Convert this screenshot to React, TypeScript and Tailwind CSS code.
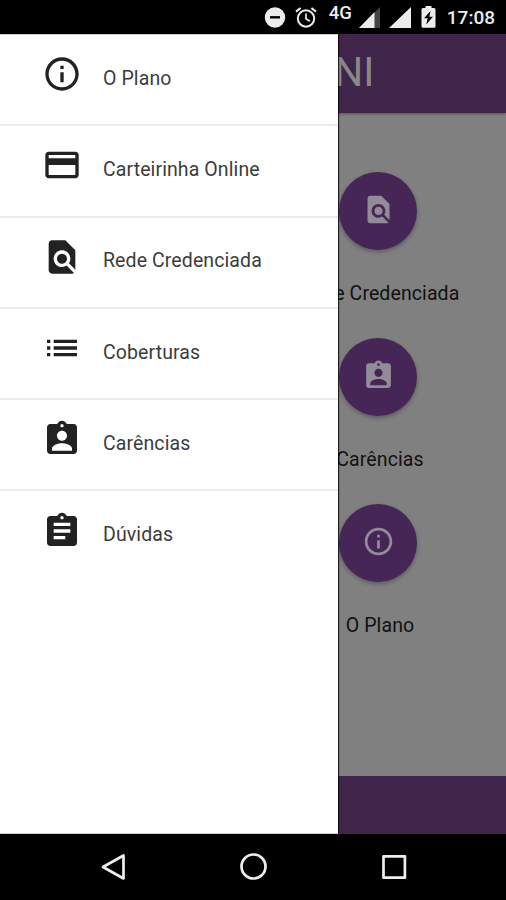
import type { IconType } from 'react-icons';
import {
    MdAssignment,
    MdAssignmentInd,
    MdCreditCard,
    MdFindInPage,
    MdInfoOutline,
    MdList,
} from 'react-icons/md';

interface IItem {
    label: string;
    Icon: IconType;
}

const menuItems: IItem[] = [
    { label: 'O Plano', Icon: MdInfoOutline },
    { label: 'Carteirinha Online', Icon: MdCreditCard },
    { label: 'Rede Credenciada', Icon: MdFindInPage },
    { label: 'Coberturas', Icon: MdList },
    { label: 'Carências', Icon: MdAssignmentInd },
    { label: 'Dúvidas', Icon: MdAssignment },
];

const shortcuts: IItem[] = [
    { label: 'Rede Credenciada', Icon: MdFindInPage },
    { label: 'Carências', Icon: MdAssignmentInd },
    { label: 'O Plano', Icon: MdInfoOutline },
];

const StatusBar = () => {
    return (
        <div className="flex h-[34px] shrink-0 items-center justify-end bg-black pt-px pr-[11px] text-[#ececec]">
            <svg className="mr-[9px] size-[22px]" viewBox="0 0 22 22">
                <circle cx="11" cy="10.500" r="10.2" fill="currentColor" />
                <path d="M6 10.3h10" stroke="#000" strokeWidth="2.4" />
            </svg>
            <svg className="mr-3 size-[22px]" viewBox="0 0 22 22" fill="none" stroke="currentColor">
                <circle cx="11" cy="11.500" r="8.2" strokeWidth="2" />
                <path d="M11 6.500v5.3l3.8 2.4" strokeWidth="1.7" />
                <path d="M1 4.7 5.6 1M21 4.7 16.400 1" strokeWidth="2.2" />
            </svg>
            <span className="mr-[6px] -mt-[9px] text-[18.5px] leading-none font-medium">4G</span>
            <svg className="mr-[9px] h-[21px] w-[22px]" viewBox="0 0 22 21">
                <path d="M22 0v21H1z" fill="#444" />
                <path d="M16.5 5v16H1z" fill="currentColor" />
            </svg>
            <svg className="mr-[10px] h-[21px] w-[22px]" viewBox="0 0 22 21">
                <path d="M22 0v21H0z" fill="currentColor" />
            </svg>
            <svg className="mr-[11px] -mt-px h-[22px] w-[15px]" viewBox="0 0 15 22">
                <path d="M4.5 0h6v2H13q1.5 0 1.5 1.5v16.700q0 1.500-1.500 1.500H2Q.5 21.700.5 20.200V3.500Q.5 2 2 2h2.500z" fill="currentColor" />
                <path d="M9.500 5 3 12.300h3.700L5.200 18.500l6.800-7.800H8.300z" fill="#000" />
            </svg>
            <span className="text-[19px] leading-none font-medium">17:08</span>
        </div>
    );
};

const Drawer = () => {
    return (
        <nav className="absolute inset-y-0 left-0 w-[338px] border-t border-b border-[#ccc] bg-white shadow-[1px_0_1px_0_rgba(0,0,0,0.75)]">
            {menuItems.map(({ label, Icon }) => (
                <div key={label} className="flex h-[91.3px] items-center border-b-2 border-[#ebebeb] pl-[42px] last:border-transparent">
                    <Icon className="mr-[21px] mb-[11px] size-10 text-[#222]" />
                    <span className="mb-[2px] text-[19.5px] leading-6 tracking-[0.1px] text-[#3c3c3c]">{label}</span>
                </div>
            ))}
        </nav>
    );
};

const NavigationBar = () => {
    return (
        <div className="flex h-[66px] shrink-0 items-center justify-center gap-[112px] bg-black pl-px text-[#eee]">
            <svg className="size-7" viewBox="0 0 28 28" fill="none" stroke="currentColor" strokeWidth="2.7" strokeLinejoin="round">
                <path d="M23.500 2.500v23L3 14z" />
            </svg>
            <svg className="size-7" viewBox="0 0 28 28" fill="none" stroke="currentColor" strokeWidth="2.7">
                <circle cx="13.500" cy="13.500" r="12" />
            </svg>
            <svg className="size-7" viewBox="0 0 28 28" fill="none" stroke="currentColor" strokeWidth="2.7" strokeLinejoin="round">
                <rect x="3.500" y="3.300" width="21.400" height="21.400" />
            </svg>
        </div>
    );
};

const App = () => {
    return (
        <div className="flex h-[900px] w-[506px] flex-col overflow-hidden bg-black font-['Roboto',sans-serif]">
            <StatusBar />
            <div className="relative flex h-[800px] flex-col overflow-hidden bg-[#808080]">
                <header className="flex h-[79px] shrink-0 items-center bg-[#40254a] pb-[2px] pl-[334px] shadow-[0_1px_3px_rgba(0,0,0,0.35)]">
                    <h1 className="text-[41px] leading-none text-[#888]">NI</h1>
                </header>
                <main className="flex flex-1 flex-col pt-[59px] pl-[254px]">
                    {shortcuts.map(({ label, Icon }) => (
                        <div key={label} className="flex h-[166px] w-[248px] flex-col items-center">
                            <div className="flex size-[78px] shrink-0 items-center justify-center rounded-full bg-[#452657] shadow-[0_2px_4px_rgba(0,0,0,0.3)]">
                                <Icon className="mb-[3px] size-[33px] text-[#928b98]" />
                            </div>
                            <span className="mt-8 ml-1 text-[19.5px] leading-6 tracking-[0.1px] whitespace-nowrap text-[#111]">{label}</span>
                        </div>
                    ))}
                </main>
                <footer className="h-[58px] shrink-0 bg-[#40254a]" />
                <Drawer />
            </div>
            <NavigationBar />
        </div>
    );
};

export default App;
